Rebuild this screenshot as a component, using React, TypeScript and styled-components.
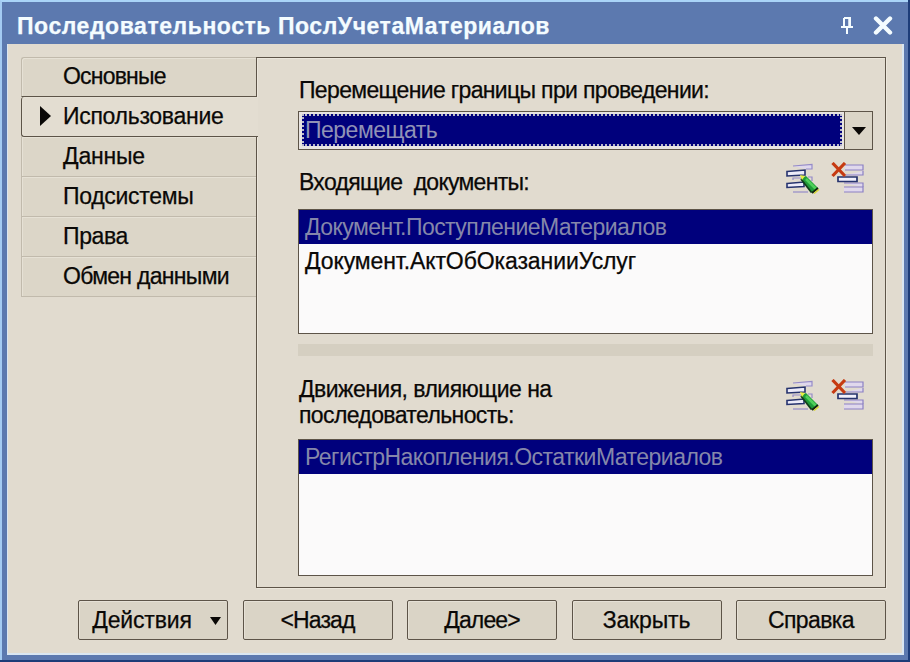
import styled, { createGlobalStyle, css } from 'styled-components';

const GlobalStyle = createGlobalStyle`
  * {
    box-sizing: border-box;
  }

  body {
    margin: 0;
    overflow: hidden;
    font-family: 'Liberation Sans', Arial, sans-serif;
    font-size: 23px;
    color: #0a0806;
  }
`;

const line = '#5d5448';
const navy = '#00007c';

const Window = styled.div`
  display: flex;
  flex-direction: column;
  width: 910px;
  height: 662px;
  padding: 0 2px 2px 0;
  background: #1d3c78;
`;

const Frame = styled.div`
  display: flex;
  flex-direction: column;
  flex: 1;
  padding: 0 4px 5px 5px;
  border-top: 2px solid #a9d4f8;
  border-left: 2px solid #a4cbf2;
  background: #5c79af;
`;

const TitleBar = styled.div`
  display: flex;
  align-items: center;
  height: 42px;
  padding: 5px 11px 0 10px;
  color: #f4fcff;

  svg {
    display: block;
  }

  .pin {
    margin: 0 20px 0 auto;
  }
`;

const Client = styled.div`
  display: flex;
  flex-direction: column;
  flex: 1;
  padding: 13px 16px 0 13px;
  border: solid #d9e6f2;
  border-width: 0 2px 2px 1px;
  background: #e1dbcf;
`;

// Text line, tracking tightens or widens the letters
const Text = styled.span<{ $tracking?: number }>`
  display: block;
  white-space: pre;
  line-height: 26px;
  letter-spacing: ${({ $tracking = 0 }) => $tracking}px;
  -webkit-text-stroke: 0.25px currentColor;
`;

const SelectedText = styled(Text)`
  -webkit-text-stroke: 0;
`;

const TitleText = styled(Text)`
  font-weight: bold;
  font-size: 23px;
`;

const Main = styled.div`
  display: flex;
  height: 531px;
`;

const Tabs = styled.div`
  width: 235px;
`;

const Tab = styled.div<{ $active?: boolean; $first?: boolean }>`
  position: relative;
  display: flex;
  align-items: center;
  height: 40px;
  padding: 0 0 2px 41px;
  border: solid #c1baac;
  border-width: 0 0 1px 1px;
  background: #dcd6c8;
  box-shadow: inset 1px 1px 0 #e6e1d5;

  ${({ $first }) =>
    $first &&
    css`
      border-top-width: 1px;
      border-bottom-color: ${line};
      border-radius: 3px 0 0 0;
    `}

  ${({ $active }) =>
    $active &&
    css`
      width: 237px;
      padding-left: 18px;
      border-color: ${line};
      border-radius: 3px 0 0 3px;
      background: #e3ddd1;
    `}

  svg {
    margin: 1px 12px 0 0;
  }
`;

const Panel = styled.div`
  width: 630px;
  padding: 19px 12px 0 41px;
  border: 1px solid ${line};
  box-shadow:
    inset 1px 1px 0 #ece7dc,
    1px 1px 0 #ece7dc;
`;

const Combo = styled.div`
  display: flex;
  height: 39px;
  margin-top: 8px;
  border: 1px solid ${line};
  background: #e8e4e2;
`;

const ComboValue = styled.div`
  display: flex;
  align-items: center;
  flex: 1;
  margin: 2px 2px 3px 3px;
  padding-left: 1px;
  border: 2px dotted #b9b9c9;
  background: ${navy};
  color: #9092b6;
`;

const ComboButton = styled.div`
  display: flex;
  align-items: center;
  justify-content: center;
  width: 28px;
  border-left: 1px solid ${line};
  background: #dbd5c7;
`;

const Header = styled.div<{ $height: number; $icons: number; $label: number }>`
  display: flex;
  justify-content: space-between;
  height: ${({ $height }) => $height}px;
  padding: ${({ $label }) => $label}px 0 0 1px;

  .icons {
    display: flex;
    gap: 11px;
    margin: ${({ $icons }) => $icons}px 8px 0 0;
  }
`;

const PanelLabel = styled.div`
  padding-left: 1px;
`;

const List = styled.div<{ $height: number }>`
  height: ${({ $height }) => $height}px;
  border: 1px solid ${line};
  background: #fbfafa;
`;

const Item = styled.div<{ $selected?: boolean }>`
  display: flex;
  align-items: center;
  height: 34px;
  padding: 0 0 1px 6px;
  color: ${({ $selected }) => ($selected ? '#8587aa' : 'inherit')};
  background: ${({ $selected }) => ($selected ? navy : 'transparent')};
`;

const Splitter = styled.div`
  height: 12px;
  margin-top: 10px;
  background: #d5cfc1;
`;

const Buttons = styled.div`
  display: flex;
  justify-content: space-between;
  width: 808px;
  margin: 12px 0 0 57px;
`;

const Button = styled.button`
  display: flex;
  align-items: center;
  justify-content: center;
  width: 150px;
  height: 40px;
  padding: 0;
  border: 1px solid ${line};
  border-radius: 2px;
  background: #dad4c6;
  box-shadow: inset 1px 1px 0 #e6e1d6;
  color: inherit;
  font: inherit;

  svg {
    margin: 2px -7px 0 18px;
  }
`;

const DownArrow = ({ width }: { width: number }): JSX.Element => (
  <svg width={width} height='8' viewBox='0 0 14 8' preserveAspectRatio='none'>
    <path d='M0 0H14L7 8Z' fill='#0a0806' />
  </svg>
);

const EditIcon = (): JSX.Element => (
  <svg width='34' height='32' viewBox='0 0 34 32'>
    <g fill='#dfd8ec' stroke='#958bc9' strokeWidth='1.2'>
      <path d='M7 4L26 2.5V7H20' />
      <path d='M7 18V16H17M22 15H26V19' fill='none' />
      <path d='M7 30H22' />
    </g>
    <path d='M1 9.5L19 8V13L1 14Z' fill='#ecebf8' stroke='#26336e' strokeWidth='1.6' />
    <path d='M1 21.5L18 20V24.5L1 25.5Z' fill='#ecebf8' stroke='#26336e' strokeWidth='1.6' />
    <path d='M15 16L20 14L32 26L26 31Z' fill='#1f9c39' />
    <path d='M15 17L25.5 30.5' stroke='#0f3f1a' strokeWidth='1.8' />
    <path d='M20 17L30 27' stroke='#4fd05a' strokeWidth='2.6' />
    <path d='M14 13L19 14L16 18Z' fill='#e8ef45' />
    <path d='M26 31L32 26' stroke='#14250f' strokeWidth='2' />
    <path d='M28 31.5L33 27.5' stroke='#d9d72f' strokeWidth='1.4' />
  </svg>
);

const DeleteIcon = (): JSX.Element => (
  <svg width='34' height='32' viewBox='0 0 34 32'>
    <g fill='#e0d8ec' stroke='#8b80c4' strokeWidth='1.2'>
      <path d='M14 3H32V8H14' />
      <path d='M15 8M32 9V13H15' />
      <path d='M13 21H32V25' />
      <path d='M13 25H32V30H13' />
    </g>
    <path d='M7 15H26V19.5H7Z' fill='#f1f0fb' stroke='#26336e' strokeWidth='1.7' />
    <path d='M1.5 1L14 14M14 1L1.5 14' stroke='#c63a12' strokeWidth='3.2' />
  </svg>
);

const tabs = [
  { title: 'Основные', tracking: -0.8 },
  { title: 'Использование', tracking: -0.3, active: true },
  { title: 'Данные', tracking: -0.2 },
  { title: 'Подсистемы', tracking: -0.3 },
  { title: 'Права', tracking: -0.4 },
  { title: 'Обмен данными', tracking: -0.7 },
];

const App = (): JSX.Element => {
  return (
    <>
      <GlobalStyle />
      <Window>
        <Frame>
          <TitleBar>
            <TitleText $tracking={0.55}>
              Последовательность ПослУчетаМатериалов
            </TitleText>
            <svg className='pin' width='12' height='18' viewBox='0 0 12 18'>
              <path
                d='M3 1H9V9M3 1V9M0 10H12M6 10V17'
                fill='none'
                stroke='#f4fcff'
                strokeWidth='2'
              />
              <path d='M8 2V9' stroke='#f4fcff' strokeWidth='1.5' />
            </svg>
            <svg width='20' height='20' viewBox='0 0 20 20'>
              <path
                d='M3 2.5L17 16.5M17 2.5L3 16.5'
                stroke='#f4fcff'
                strokeWidth='4.4'
                strokeLinecap='round'
              />
            </svg>
          </TitleBar>
          <Client>
            <Main>
              <Tabs>
                {tabs.map(({ title, tracking, active }, i) => (
                  <Tab key={title} $active={active} $first={i === 0}>
                    {active && (
                      <svg width='11' height='20' viewBox='0 0 11 20'>
                        <path d='M0 0L11 10L0 20Z' fill='#0a0806' />
                      </svg>
                    )}
                    <Text $tracking={tracking}>{title}</Text>
                  </Tab>
                ))}
              </Tabs>
              <Panel>
                <PanelLabel>
                  <Text $tracking={-0.66}>
                    Перемещение границы при проведении:
                  </Text>
                </PanelLabel>
                <Combo>
                  <ComboValue>
                    <SelectedText $tracking={-0.5}>Перемещать</SelectedText>
                  </ComboValue>
                  <ComboButton>
                    <DownArrow width={14} />
                  </ComboButton>
                </Combo>
                <Header $height={59} $label={19} $icons={-7}>
                  <Text $tracking={-0.72}>Входящие  документы:</Text>
                  <div className='icons'>
                    <EditIcon />
                    <DeleteIcon />
                  </div>
                </Header>
                <List $height={125}>
                  <Item $selected>
                    <SelectedText $tracking={-0.55}>
                      Документ.ПоступлениеМатериалов
                    </SelectedText>
                  </Item>
                  <Item>
                    <Text $tracking={-0.1}>Документ.АктОбОказанииУслуг</Text>
                  </Item>
                </List>
                <Splitter />
                <Header $height={83} $label={20} $icons={3}>
                  <div>
                    <Text $tracking={-0.53}>Движения, влияющие на</Text>
                    <Text $tracking={-0.62}>последовательность:</Text>
                  </div>
                  <div className='icons'>
                    <EditIcon />
                    <DeleteIcon />
                  </div>
                </Header>
                <List $height={137}>
                  <Item $selected>
                    <SelectedText $tracking={-0.53}>
                      РегистрНакопления.ОстаткиМатериалов
                    </SelectedText>
                  </Item>
                </List>
              </Panel>
            </Main>
            <Buttons>
              <Button>
                <Text $tracking={-0.15}>Действия</Text>
                <DownArrow width={11} />
              </Button>
              <Button>
                <Text $tracking={-0.9}>&lt;Назад</Text>
              </Button>
              <Button>
                <Text $tracking={-0.9}>Далее&gt;</Text>
              </Button>
              <Button>
                <Text $tracking={-0.15}>Закрыть</Text>
              </Button>
              <Button>
                <Text $tracking={-0.6}>Справка</Text>
              </Button>
            </Buttons>
          </Client>
        </Frame>
      </Window>
    </>
  );
};

export default App;
